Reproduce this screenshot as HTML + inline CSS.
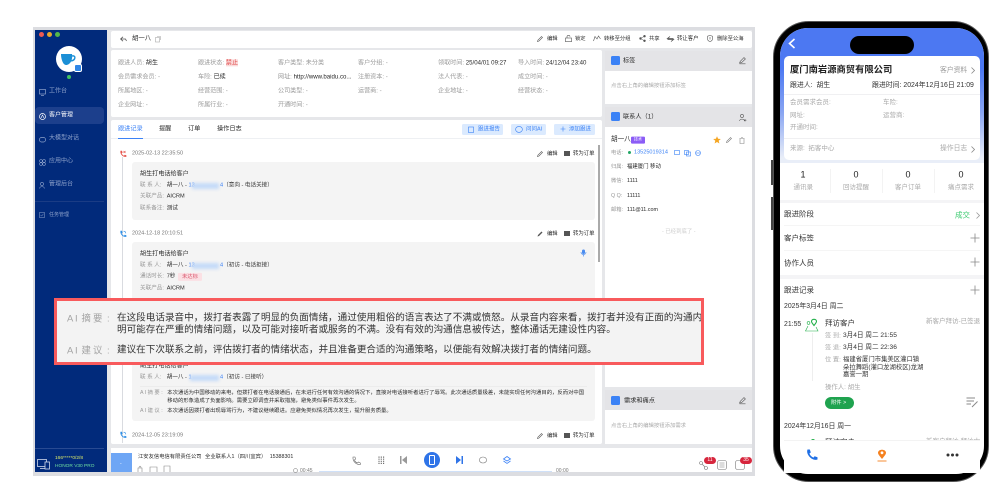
<!DOCTYPE html>
<html lang="zh"><head><meta charset="utf-8"><title>CRM</title>
<style>
html,body{margin:0;padding:0;background:#fff}
body{width:1000px;height:483px;overflow:hidden;position:relative;font-family:"Liberation Sans","Noto Sans CJK SC",sans-serif;color:#333}
.t{position:absolute;white-space:nowrap;transform:translateY(-50%);font-size:6.1px;line-height:1.2;font-style:normal}
.b{position:absolute}
svg{position:absolute;overflow:visible;fill:none}
.g{color:#999}.d{color:#2a2a2a}.w{color:#90a4cc;font-size:6px}
.bl{color:#3b82f6}
#app,#ph{filter:blur(.33px)}
.p{font-size:6.9px}
.q{font-size:6.5px;color:#aaa}
.s{font-size:5.6px}
.k{font-size:9.4px;color:#a3a3a3}
</style></head><body>
<div id="app">
<div class="b" style="left:33px;top:27px;width:722px;height:449px;background:#dcdde1"></div>
<div class="b" style="left:35px;top:30px;width:717px;height:442px;background:#e6e7ea"></div>
<!-- sidebar -->
<div class="b" style="left:35px;top:30px;width:72px;height:442px;background:#012a7b"></div>
<div class="b" style="left:38.5px;top:32px;width:5px;height:5px;border-radius:50%;background:#ee5a52"></div>
<div class="b" style="left:46.5px;top:32px;width:5px;height:5px;border-radius:50%;background:#e8a82e"></div>
<div class="b" style="left:54.5px;top:32px;width:5px;height:5px;border-radius:50%;background:#55b64a"></div>
<div class="b" style="left:56px;top:46px;width:26px;height:26px;border-radius:50%;background:#fff"></div>
<svg style="left:60px;top:53px" width="18" height="14"><path d="M1 1H12C13 7 10 12 6 12C3 12 1 6 1 1Z" fill="#1b8fd6"/><path d="M12 3C16 2 16 7 11 8" stroke="#1b8fd6" stroke-width="1.4"/></svg>
<div class="b" style="left:74px;top:64px;width:8px;height:8px;border-radius:2px;background:#2f86e6;border:1px solid #fff;box-sizing:border-box"></div>
<div class="b" style="left:67px;top:74.5px;width:4px;height:4px;border-radius:50%;background:#3fc15f"></div>
<div class="b" style="left:35px;top:107px;width:69px;height:17px;border-radius:4px;background:#1c3f8c"></div>
<svg style="left:39px;top:89px" width="7" height="7"><rect x=".5" y=".5" width="6" height="4.5" stroke="#90a4cc" stroke-width=".7"/><path d="M2 6.5H5" stroke="#90a4cc" stroke-width=".7"/></svg>
<i class="t w" style="left:49px;top:92px">工作台</i>
<svg style="left:39px;top:113px" width="7" height="7"><circle cx="3.5" cy="3.5" r="3" stroke="#fff" stroke-width=".7"/><path d="M2 5L3.5 2L5 5" stroke="#fff" stroke-width=".6"/></svg>
<i class="t" style="left:49px;top:116px;color:#fff;font-size:6px">客户管理</i>
<svg style="left:39px;top:136px" width="7" height="7"><rect x=".5" y="1.5" width="6" height="4.5" rx="2" stroke="#90a4cc" stroke-width=".7"/></svg>
<i class="t w" style="left:49px;top:139px">大模型对话</i>
<svg style="left:39px;top:159px" width="7" height="7"><circle cx="2" cy="2" r="1.4" stroke="#90a4cc" stroke-width=".6"/><circle cx="5" cy="2" r="1.4" stroke="#90a4cc" stroke-width=".6"/><circle cx="2" cy="5" r="1.4" stroke="#90a4cc" stroke-width=".6"/><circle cx="5" cy="5" r="1.4" stroke="#90a4cc" stroke-width=".6"/></svg>
<i class="t w" style="left:49px;top:162px">应用中心</i>
<svg style="left:39px;top:182px" width="7" height="7"><circle cx="3" cy="2" r="1.6" stroke="#90a4cc" stroke-width=".6"/><path d="M.5 6.5C1 4 5 4 5.5 6.5" stroke="#90a4cc" stroke-width=".6"/></svg>
<i class="t w" style="left:49px;top:185px">管理后台</i>
<div class="b" style="left:35px;top:200.5px;width:69px;height:1px;background:#1a3c85"></div>
<svg style="left:39px;top:212px" width="6" height="6"><rect x=".5" y=".5" width="5" height="5" stroke="#90a4cc" stroke-width=".5"/><path d="M1.5 3L2.7 4L4.5 1.8" stroke="#90a4cc" stroke-width=".5"/></svg>
<i class="t w" style="left:49px;top:215px;font-size:5px">任务管理</i>
<div class="b" style="left:35px;top:448px;width:69px;height:1px;background:#284a92"></div>
<svg style="left:37px;top:459px" width="14" height="11"><rect x=".5" y=".5" width="9" height="7" stroke="#cfd8ea" stroke-width=".8"/><rect x="8" y="3" width="4.5" height="7" fill="#012a7b" stroke="#cfd8ea" stroke-width=".8"/><path d="M3 9.5H8" stroke="#cfd8ea" stroke-width=".8"/></svg>
<i class="t" style="left:55px;top:459px;font-size:4.8px;color:#d9e86b">166*****0/2/8</i>
<i class="t" style="left:55px;top:467px;font-size:4.8px;color:#6fe0a0">HONOR V30 PRO</i>
<!-- header -->
<div class="b" style="left:111px;top:31px;width:641px;height:17px;background:#fff;border-radius:2px"></div>
<svg style="left:120px;top:36px" width="7" height="6"><path d="M3 .8L.6 3L3 5.2M1 3H5.5L6.5 5" stroke="#555" stroke-width=".8"/></svg>
<i class="t d" style="left:132px;top:39px;font-size:6.4px">胡一八</i>
<svg style="left:155px;top:36px" width="6" height="6"><rect x=".5" y="1.5" width="4" height="4.5" stroke="#aaa" stroke-width=".6"/><path d="M2 .5H5.5V4" stroke="#aaa" stroke-width=".6"/></svg>
<svg style="left:537px;top:36px" width="6" height="6"><path d="M.5 5.5L1 4L4.5.5L5.5 1.5L2 5Z" stroke="#555" stroke-width=".6"/></svg><i class="t d" style="left:547px;top:39px;font-size:5.3px">编辑</i>
<svg style="left:565px;top:35px" width="7" height="7"><rect x=".5" y="3" width="6" height="3.7" stroke="#555" stroke-width=".6"/><path d="M2 3V1.6C2 0 5 0 5 1.6" stroke="#555" stroke-width=".6"/></svg><i class="t d" style="left:575px;top:39px;font-size:5.3px">锁定</i>
<svg style="left:593px;top:35px" width="8" height="7"><path d="M.5 6L2 1.5L4 4L5.5 1L7.5 4" stroke="#555" stroke-width=".6"/></svg><i class="t d" style="left:604px;top:39px;font-size:5.3px">转移至分组</i>
<svg style="left:639px;top:35px" width="7" height="7"><circle cx="1.5" cy="3.5" r="1.2" fill="#555"/><circle cx="5.5" cy="1.2" r="1.2" fill="#555"/><circle cx="5.5" cy="5.8" r="1.2" fill="#555"/><path d="M1.5 3.5L5.5 1.2M1.5 3.5L5.5 5.8" stroke="#555" stroke-width=".5"/></svg><i class="t d" style="left:649px;top:39px;font-size:5.3px">共享</i>
<svg style="left:667px;top:36px" width="7" height="6"><path d="M3 .5L.5 2.5H6.5M4 5.5L6.5 3.5H.5" stroke="#444" stroke-width=".8"/></svg><i class="t d" style="left:677px;top:39px;font-size:5.4px">转让客户</i>
<svg style="left:707px;top:35px" width="6" height="7"><path d="M.6 1.2L3 .4L5.4 1.2V4C5.4 5.5 4 6.3 3 6.6C2 6.3 .6 5.5 .6 4Z" stroke="#555" stroke-width=".6"/><path d="M3 2V4.5" stroke="#555" stroke-width=".6"/></svg><i class="t d" style="left:717px;top:39px;font-size:5.3px">删除至公海</i>
<!-- info -->
<div class="b" style="left:111px;top:50px;width:491px;height:67px;background:#fff;border-radius:2px"></div>
<i class="t g" style="left:118px;top:62.5px">跟进人员: <span class="d">胡生</span></i>
<i class="t g" style="left:198px;top:62.5px">跟进状态: <span style="color:#e04b4b;background:#fadada">禁止</span></i>
<i class="t g" style="left:278px;top:62.5px">客户类型: 未分类</i>
<i class="t g" style="left:358px;top:62.5px">客户分组: -</i>
<i class="t g" style="left:438px;top:62.5px">领取时间: <span class="d">25/04/01 09:27</span></i>
<i class="t g" style="left:518px;top:62.5px">导入时间: <span class="d">24/12/04 23:40</span></i>
<i class="t g" style="left:118px;top:77px">会员需求会员: -</i>
<i class="t g" style="left:198px;top:77px">车险: <span class="d">已续</span></i>
<i class="t g" style="left:278px;top:77px">网址: <span class="d">http://www.baidu.co...</span></i>
<i class="t g" style="left:358px;top:77px">注册资本: -</i>
<i class="t g" style="left:438px;top:77px">法人代表: -</i>
<i class="t g" style="left:518px;top:77px">成立时间: -</i>
<i class="t g" style="left:118px;top:91px">所属地区: -</i>
<i class="t g" style="left:198px;top:91px">经营范围: -</i>
<i class="t g" style="left:278px;top:91px">公司类型: -</i>
<i class="t g" style="left:358px;top:91px">运营商: -</i>
<i class="t g" style="left:438px;top:91px">企业地址: -</i>
<i class="t g" style="left:518px;top:91px">经营状态: -</i>
<i class="t g" style="left:118px;top:105px">企业网址: -</i>
<i class="t g" style="left:198px;top:105px">所属行业: -</i>
<i class="t g" style="left:278px;top:105px">开通时间: -</i>
<!-- main -->
<div class="b" style="left:111px;top:120px;width:491px;height:324px;background:#fff;border-radius:2px"></div>
<div class="b" style="left:111px;top:138px;width:491px;height:1px;background:#eef0f3"></div>
<i class="t bl" style="left:118px;top:129px;font-size:6.2px">跟进记录</i>
<div class="b" style="left:118px;top:137.5px;width:25px;height:1.3px;background:#3b82f6"></div>
<i class="t d" style="left:159px;top:129px;font-size:6.2px">提醒</i>
<i class="t d" style="left:188px;top:129px;font-size:6.2px">订单</i>
<i class="t d" style="left:217px;top:129px;font-size:6.2px">操作日志</i>
<div class="b" style="left:462px;top:124px;width:41px;height:11px;background:#dbeafe;border-radius:1.5px"></div>
<svg style="left:468px;top:126px" width="6" height="7"><rect x=".5" y="1" width="5" height="5.5" stroke="#3b82f6" stroke-width=".6"/></svg>
<i class="t bl" style="left:478px;top:129.5px;font-size:5.5px">跟进报告</i>
<div class="b" style="left:511px;top:124px;width:35px;height:11px;background:#dbeafe;border-radius:1.5px"></div>
<svg style="left:515px;top:126px" width="8" height="7"><ellipse cx="4" cy="3.4" rx="3.4" ry="3" stroke="#3b82f6" stroke-width=".6"/></svg>
<i class="t bl" style="left:526px;top:129.5px;font-size:5.5px">问问AI</i>
<div class="b" style="left:554px;top:124px;width:41px;height:11px;background:#dbeafe;border-radius:1.5px"></div>
<svg style="left:560px;top:126px" width="6" height="6"><path d="M3 .5V5.5M.5 3H5.5" stroke="#3b82f6" stroke-width=".6"/></svg>
<i class="t bl" style="left:569px;top:129.5px;font-size:5.5px">添加跟进</i>
<div class="b" style="left:122px;top:157px;width:1px;height:286px;background:#d9dbe0"></div>
<div class="b" style="left:598px;top:145px;width:2px;height:117px;background:#aaa"></div>
<!-- entry1 -->
<svg style="left:119px;top:149.5px" width="8" height="8"><path d="M1.5 .8L3 .8L3.6 2.6L2.6 3.4C3.2 4.6 3.9 5.2 5 5.8L5.8 4.8L7.4 5.4V6.8C4 7.6 .6 4 1.5 .8Z" fill="#e5534b"/><path d="M4.5 1L6.5 3M6.5 1L4.5 3" stroke="#e5534b" stroke-width=".6"/></svg>
<i class="t" style="left:132px;top:153.5px;font-size:5.5px;color:#777">2025-02-13 22:35:50</i>
<svg style="left:537px;top:150.5px" width="6" height="6"><path d="M.5 5.5L1 4L4.5.5L5.5 1.5L2 5Z" stroke="#555" stroke-width=".6"/></svg><i class="t d" style="left:547px;top:153.5px;font-size:5.3px">编辑</i>
<div class="b" style="left:564px;top:151px;width:6px;height:5px;background:#555"></div><i class="t d" style="left:573px;top:153.5px;font-size:5.4px">转为订单</i>
<div class="b" style="left:132px;top:162px;width:463px;height:58px;background:#f4f4f4;border-radius:3px"></div>
<i class="t d" style="left:140px;top:173.5px;font-size:6.1px">胡生打电话给客户</i>
<i class="t g s" style="left:140px;top:186px">联 系 人:</i>
<i class="t d s" style="left:166.7px;top:186px">胡一八 - <span class="bl">13</span></i>
<div class="b" style="left:192px;top:183px;width:27px;height:6px;background:#c4daf8;filter:blur(1.5px)"></div>
<i class="t s" style="left:220px;top:186px"><span class="bl">4</span>（意向 - 电话关接）</i>
<i class="t g s" style="left:140px;top:197px">关联产品:</i><i class="t d s" style="left:166.7px;top:197px">AICRM</i>
<i class="t g s" style="left:140px;top:209px">联系备注:</i><i class="t d s" style="left:166.7px;top:209px">测试</i>
<!-- entry2 -->
<svg style="left:119px;top:229.5px" width="8" height="8"><path d="M1.5 .8L3 .8L3.6 2.6L2.6 3.4C3.2 4.6 3.9 5.2 5 5.8L5.8 4.8L7.4 5.4V6.8C4 7.6 .6 4 1.5 .8Z" fill="#2f8fe6"/><path d="M4.5 1.2C6 1.2 6.8 2 6.8 3.4" stroke="#2f8fe6" stroke-width=".6"/></svg>
<i class="t" style="left:132px;top:233.5px;font-size:5.5px;color:#777">2024-12-18 20:10:51</i>
<svg style="left:537px;top:230.5px" width="6" height="6"><path d="M.5 5.5L1 4L4.5.5L5.5 1.5L2 5Z" fill="#555"/></svg><i class="t d" style="left:547px;top:233.5px;font-size:5.3px">编辑</i>
<div class="b" style="left:564px;top:231px;width:6px;height:5px;background:#555"></div><i class="t d" style="left:573px;top:233.5px;font-size:5.4px">转为订单</i>
<div class="b" style="left:132px;top:242px;width:463px;height:179px;background:#f4f4f4;border-radius:3px"></div>
<svg style="left:580px;top:249px" width="7" height="8"><rect x="2" y=".5" width="3" height="4.5" rx="1.5" fill="#4a8cf0"/><path d="M1 3C1 6.4 6 6.4 6 3M3.5 5.8V7.5" stroke="#4a8cf0" stroke-width=".7"/></svg>
<i class="t d" style="left:140px;top:253.5px;font-size:6.1px">胡生打电话给客户</i>
<i class="t g s" style="left:140px;top:266px">联 系 人:</i>
<i class="t d s" style="left:166.7px;top:266px">胡一八 - <span class="bl">13</span></i>
<div class="b" style="left:192px;top:263px;width:27px;height:6px;background:#c4daf8;filter:blur(1.5px)"></div>
<i class="t s" style="left:220px;top:266px"><span class="bl">4</span>（初访 - 电话拒接）</i>
<i class="t g s" style="left:140px;top:277px">通话时长:</i><i class="t d s" style="left:166.7px;top:277px">7秒</i>
<i class="t" style="left:178px;top:277px;font-size:5.3px;color:#d9536a;background:#fbe0e4;padding:1px 4px;border-radius:1px">未达标</i>
<i class="t g s" style="left:140px;top:289px">关联产品:</i><i class="t d s" style="left:166.7px;top:289px">AICRM</i>
<!-- entry3 -->
<i class="t d" style="left:140px;top:366px;font-size:6.1px">胡生打电话给客户</i>
<i class="t g s" style="left:140px;top:378px">联 系 人:</i>
<i class="t d s" style="left:166.7px;top:378px">胡一八 - <span class="bl">1</span></i>
<div class="b" style="left:190px;top:375px;width:29px;height:6px;background:#c4daf8;filter:blur(1.5px)"></div>
<i class="t s" style="left:220px;top:378px"><span class="bl">4</span>（初访 - 已接听）</i>
<div class="b" style="left:140px;top:385.5px;width:447px;height:1px;background:#ececec"></div>
<i class="t g" style="left:140px;top:393.3px;font-size:5.3px">A I 摘 要 :</i>
<i class="t d" style="left:167.3px;top:393.3px;font-size:5.35px">本次通话为中国移动的来电，但拨打者在电话接通后，在未进行任何有效沟通的情况下，直接对电话接听者进行了辱骂。此次通话质量极差，未能实现任何沟通目的，反而对中国</i>
<i class="t d" style="left:167.3px;top:400.5px;font-size:5.35px">移动的形象造成了负面影响。需要立即调查并采取措施，避免类似事件再次发生。</i>
<i class="t g" style="left:140px;top:411px;font-size:5.3px">A I 建 议 :</i>
<i class="t d" style="left:167.3px;top:411px;font-size:5.35px">本次通话因拨打者出现辱骂行为，不建议继续跟进。应避免类似情况再次发生，提升服务质量。</i>
<svg style="left:119px;top:431px" width="8" height="8"><path d="M1.5 .8L3 .8L3.6 2.6L2.6 3.4C3.2 4.6 3.9 5.2 5 5.8L5.8 4.8L7.4 5.4V6.8C4 7.6 .6 4 1.5 .8Z" fill="#2f8fe6"/><path d="M4.5 1.2C6 1.2 6.8 2 6.8 3.4" stroke="#2f8fe6" stroke-width=".6"/></svg>
<i class="t" style="left:132px;top:435.5px;font-size:5.5px;color:#777">2024-12-05 23:19:09</i>
<svg style="left:537px;top:432.5px" width="6" height="6"><path d="M.5 5.5L1 4L4.5.5L5.5 1.5L2 5Z" stroke="#555" stroke-width=".6"/></svg><i class="t d" style="left:547px;top:435.5px;font-size:5.3px">编辑</i>
<div class="b" style="left:564px;top:433px;width:6px;height:5px;background:#555"></div><i class="t d" style="left:573px;top:435.5px;font-size:5.4px">转为订单</i>
<!-- right panels -->
<div class="b" style="left:605px;top:51px;width:147px;height:20px;background:#e4e4e7"></div>
<div class="b" style="left:605px;top:71px;width:147px;height:33px;background:#fff"></div>
<div class="b" style="left:611px;top:56px;width:9px;height:9px;background:#3b82f6;border-radius:1.5px"></div>
<i class="t d" style="left:623px;top:60.5px;font-size:6.2px">标签</i>
<svg style="left:739px;top:57px" width="7" height="7"><path d="M.6 6L1.2 4.4L5 .6L6.4 2L2.6 5.6ZM.5 6.8H6.5" stroke="#555" stroke-width=".6"/></svg>
<i class="t" style="left:611px;top:86px;font-size:5.36px;color:#aaa">点击右上角的编辑按钮添加标签</i>
<div class="b" style="left:605px;top:107px;width:147px;height:20px;background:#e4e4e7"></div>
<div class="b" style="left:605px;top:127px;width:147px;height:260px;background:#fff"></div>
<div class="b" style="left:611px;top:112px;width:9px;height:9px;background:#3b82f6;border-radius:1.5px"></div>
<i class="t d" style="left:623px;top:117px;font-size:6.2px">联系人（1）</i>
<svg style="left:739px;top:113.5px" width="8" height="8"><circle cx="3" cy="2" r="1.6" stroke="#555" stroke-width=".6"/><path d="M.5 7C1 4.5 5 4.5 5.5 7M6 5V7.5M5 6.2H7.4" stroke="#555" stroke-width=".6"/></svg>
<i class="t d" style="left:611px;top:140px;font-size:6.6px">胡一八</i>
<i class="t" style="left:631px;top:140px;font-size:4px;color:#fff;background:#8b5cf6;padding:1px 3px;border-radius:1px">技术</i>
<svg style="left:713px;top:136px" width="8" height="8"><path d="M4 .3L5.1 2.8L7.8 3L5.7 4.8L6.4 7.5L4 6L1.6 7.5L2.3 4.8L.2 3L2.9 2.8Z" fill="#f5a623"/></svg>
<svg style="left:726px;top:137px" width="6" height="6"><path d="M.5 5.5L1 4L4.5.5L5.5 1.5L2 5Z" stroke="#777" stroke-width=".6"/></svg>
<svg style="left:739px;top:136.5px" width="6" height="7"><path d="M.5 1.5H5.5M1 1.5V6.5H5V1.5M2 .5H4" stroke="#888" stroke-width=".6"/></svg>
<i class="t g" style="left:611px;top:152.5px;font-size:5.3px">电话:</i>
<div class="b" style="left:627.5px;top:151px;width:3px;height:3px;border-radius:50%;background:#22a565"></div>
<i class="t bl" style="left:634px;top:152.5px;font-size:5.55px">13525019314</i>
<svg style="left:674px;top:149.5px" width="6" height="6"><rect x=".5" y=".5" width="5" height="4" stroke="#3b82f6" stroke-width=".6"/></svg>
<svg style="left:684px;top:149.5px" width="7" height="6"><rect x=".5" y=".5" width="4" height="4" stroke="#3b82f6" stroke-width=".6"/><rect x="2.5" y="2" width="4" height="4" stroke="#3b82f6" stroke-width=".6"/></svg>
<svg style="left:695px;top:149.5px" width="6" height="6"><circle cx="3" cy="3" r="2.5" stroke="#3b82f6" stroke-width=".6"/><path d="M1 3H5" stroke="#3b82f6" stroke-width=".6"/></svg>
<i class="t g" style="left:611px;top:167px;font-size:5.3px">归属:</i><i class="t d" style="left:627px;top:167px;font-size:5.4px">福建厦门 移动</i>
<i class="t g" style="left:611px;top:181px;font-size:5.3px">微信:</i><i class="t d" style="left:627px;top:181px;font-size:5.4px">1111</i>
<i class="t g" style="left:611px;top:195.5px;font-size:5.3px">Q Q:</i><i class="t d" style="left:627px;top:195.5px;font-size:5.4px">11111</i>
<i class="t g" style="left:611px;top:210px;font-size:5.3px">邮箱:</i><i class="t d" style="left:627px;top:210px;font-size:5.4px">111@11.com</i>
<i class="t" style="left:662px;top:231.5px;font-size:5.4px;color:#ccc">- 已经到底了 -</i>
<div class="b" style="left:605px;top:390px;width:147px;height:20px;background:#e4e4e7"></div>
<div class="b" style="left:605px;top:410px;width:147px;height:34px;background:#fff"></div>
<div class="b" style="left:611px;top:396px;width:9px;height:9px;background:#3b82f6;border-radius:1.5px"></div>
<i class="t d" style="left:624px;top:400.5px;font-size:6.2px">需求和痛点</i>
<svg style="left:739px;top:397px" width="7" height="7"><path d="M.6 6L1.2 4.4L5 .6L6.4 2L2.6 5.6ZM.5 6.8H6.5" stroke="#555" stroke-width=".6"/></svg>
<i class="t" style="left:611px;top:426px;font-size:5.36px;color:#aaa">点击右上角的编辑按钮添加需求</i>
<!-- bottom -->
<div class="b" style="left:111px;top:448px;width:641px;height:24px;background:#fff"></div>
<div class="b" style="left:111px;top:453px;width:21px;height:19px;background:#6ea6f5"></div>
<i class="t" style="left:120px;top:464px;color:#fff;font-size:5px">-</i>
<i class="t d" style="left:138px;top:457px;font-size:5.3px;word-spacing:2px">江安友信电信有限责任公司 全业联系人1（四川宜宾） 15388301</i>
<svg style="left:137px;top:465px" width="36" height="7"><path d="M1 7V3H5V7M2 3C2 .5 4 .5 4 3M13 7V2H20V7M27 7V1H33V7" stroke="#888" stroke-width=".6"/></svg>
<svg style="left:352px;top:456px" width="9" height="9"><path d="M1 1L3 1L3.5 3L2.5 4C3 5.5 4 6.5 5.5 7L6.5 6L8.4 7V8.5C4 9 .5 5 1 1Z" stroke="#666" stroke-width=".6"/></svg>
<svg style="left:378px;top:456px" width="7" height="9"><path d="M1 .5V8M3.3 .5V8M5.6 .5V8" stroke="#666" stroke-width="1.1" stroke-dasharray="1.2 .9"/></svg>
<svg style="left:400px;top:456px" width="7" height="8"><rect x="0" y="0" width="1.5" height="8" fill="#999"/><path d="M7 0V8L2 4Z" fill="#999"/></svg>
<div class="b" style="left:424px;top:452px;width:16px;height:16px;border-radius:50%;background:#2f74e8"></div>
<div class="b" style="left:429px;top:455px;width:6px;height:10px;border:1px solid #fff;box-sizing:border-box;border-radius:1px"></div>
<svg style="left:456px;top:456px" width="7" height="8"><path d="M0 0V8L5 4Z" fill="#2f74e8"/><rect x="5.5" y="0" width="1.5" height="8" fill="#2f74e8"/></svg>
<svg style="left:479px;top:456px" width="8" height="8"><ellipse cx="4" cy="4" rx="3.6" ry="3" stroke="#777" stroke-width=".6"/></svg>
<svg style="left:503px;top:456px" width="8" height="8"><path d="M4 .5L7.5 3L4 5L.5 3ZM.5 5L4 7.4L7.5 5" stroke="#3b82f6" stroke-width=".8"/></svg>
<svg style="left:293px;top:468px" width="5" height="5"><circle cx="2.5" cy="2.5" r="2" stroke="#777" stroke-width=".5"/></svg>
<i class="t" style="left:300px;top:471px;font-size:5px;color:#777">00:45</i>
<div class="b" style="left:319px;top:471px;width:233px;height:1px;background:#cfe0f8"></div>
<i class="t" style="left:556px;top:471px;font-size:5px;color:#777">00:00</i>
<svg style="left:699px;top:461px" width="9" height="9"><circle cx="2" cy="2" r="1.5" stroke="#777" stroke-width=".6"/><circle cx="7" cy="7" r="1.5" stroke="#777" stroke-width=".6"/><path d="M3 3L6 6" stroke="#777" stroke-width=".6"/></svg>
<div class="b" style="left:704px;top:457px;width:12px;height:7px;border-radius:4px;background:#d7263d;color:#fff;font-size:5px;line-height:7px;text-align:center">11</div>
<svg style="left:717px;top:460px" width="10" height="10"><rect x=".5" y=".5" width="9" height="9" rx="2" stroke="#777" stroke-width=".6"/><path d="M2.5 3H7.5M2.5 5H7.5M2.5 7H7.5" stroke="#777" stroke-width=".5"/></svg>
<svg style="left:735px;top:460px" width="10" height="10"><rect x=".5" y=".5" width="9" height="9" rx="2" stroke="#777" stroke-width=".6"/></svg>
<div class="b" style="left:740px;top:457px;width:12px;height:7px;border-radius:4px;background:#d7263d;color:#fff;font-size:5px;line-height:7px;text-align:center">35</div>
<!-- overlay -->
<div class="b" style="left:54px;top:297.7px;width:649.5px;height:67.5px;box-sizing:border-box;border:3.4px solid #f85a5c;background:#f3f3f3;overflow:hidden"></div>
<div class="b" style="left:57px;top:301px;width:643.5px;height:61px;overflow:hidden">
<i class="t k" style="left:10px;top:16.5px">A</i><i class="t k" style="left:18px;top:16.5px">I</i><i class="t k" style="left:24.5px;top:16.5px">摘</i><i class="t k" style="left:36px;top:16.5px">要</i><i class="t k" style="left:50px;top:16.5px">:</i>
<i class="t" style="left:60px;top:16.5px;font-size:9.6px;color:#333">在这段电话录音中，拨打者表露了明显的负面情绪，通过使用粗俗的语言表达了不满或愤怒。从录音内容来看，拨打者并没有正面的沟通内</i>
<i class="t" style="left:60px;top:28.7px;font-size:9.6px;color:#333">明可能存在严重的情绪问题，以及可能对接听者或服务的不满。没有有效的沟通信息被传达，整体通话无建设性内容。</i>
<i class="t k" style="left:10px;top:49px">A</i><i class="t k" style="left:18px;top:49px">I</i><i class="t k" style="left:24.5px;top:49px">建</i><i class="t k" style="left:36px;top:49px">议</i><i class="t k" style="left:50px;top:49px">:</i>
<i class="t" style="left:60px;top:49px;font-size:9.6px;color:#333">建议在下次联系之前，评估拨打者的情绪状态，并且准备更合适的沟通策略，以便能有效解决拨打者的情绪问题。</i>
</div>
</div>
<!-- phone -->
<div id="ph">
<div class="b" style="left:771px;top:160px;width:2.5px;height:25px;background:#444"></div>
<div class="b" style="left:771px;top:197px;width:2.5px;height:33px;background:#444"></div>
<div class="b" style="left:772.5px;top:21px;width:216px;height:461px;box-sizing:border-box;background:#000;border:1px solid #555;border-radius:36px"></div>
<div class="b" style="left:780px;top:28px;width:203.5px;height:445.5px;border-radius:28px;overflow:hidden;background:#fff">
 <div class="b" style="left:0;top:0;width:100%;height:135px;background:linear-gradient(#4c78f2 0,#4c78f2 40px,#8aa6f2 85px,#e9eef8 130px)"></div>
 <svg style="left:8px;top:10px" width="8" height="11"><path d="M6.5 1L1.5 5.5L6.5 10" stroke="#fff" stroke-width="1.6"/></svg>
 <div class="b" style="left:70px;top:8px;width:64px;height:18px;border-radius:9px;background:#000"></div>
 <div class="b" style="left:4px;top:28px;width:196px;height:104px;border-radius:5px;background:#fff"></div>
 <div class="b" style="left:0;top:135px;width:100%;height:37px;background:#fff"></div>
 <div class="b" style="left:0;top:172px;width:100%;height:3px;background:#f4f4f6"></div>
 <div class="b" style="left:0;top:247px;width:100%;height:4px;background:#f4f4f6"></div>
</div>
<i class="t" style="left:790px;top:70px;font-size:9.3px;font-weight:bold;color:#222">厦门南岩源商贸有限公司</i>
<i class="t" style="left:940px;top:70.5px;font-size:6.8px;color:#999">客户资料</i>
<svg style="left:971px;top:67px" width="4" height="7"><path d="M.5 .5L3.5 3.5L.5 6.5" stroke="#888" stroke-width=".8"/></svg>
<i class="t p" style="left:790px;top:86px;color:#333">跟进人: &nbsp;胡生</i>
<i class="t p" style="left:872px;top:86px;color:#333">跟进时间: 2024年12月16日 21:09</i>
<div class="b" style="left:784px;top:94px;width:196px;height:1px;background:#f0f0f2"></div>
<i class="t q" style="left:790px;top:103px">会员需求会员:</i><i class="t q" style="left:883px;top:103px">车险:</i>
<i class="t q" style="left:790px;top:115.5px">网址:</i><i class="t q" style="left:883px;top:115.5px">运营商:</i>
<i class="t q" style="left:790px;top:128px">开通时间:</i>
<div class="b" style="left:784px;top:138px;width:196px;height:1px;background:#f0f0f2"></div>
<i class="t q" style="left:790px;top:149px">来源: &nbsp;拓客中心</i>
<i class="t q" style="left:940px;top:149px;font-size:6.8px">操作日志</i>
<svg style="left:971px;top:146px" width="4" height="7"><path d="M.5 .5L3.5 3.5L.5 6.5" stroke="#888" stroke-width=".8"/></svg>
<i class="t" style="left:800.5px;top:174.5px;font-size:9px;color:#222">1</i>
<i class="t" style="left:853.5px;top:174.5px;font-size:9px;color:#222">0</i>
<i class="t" style="left:905.5px;top:174.5px;font-size:9px;color:#222">0</i>
<i class="t" style="left:958.5px;top:174.5px;font-size:9px;color:#222">0</i>
<i class="t q" style="left:793.5px;top:187.5px">通讯录</i>
<i class="t q" style="left:843px;top:187.5px">回访提醒</i>
<i class="t q" style="left:895px;top:187.5px">客户订单</i>
<i class="t q" style="left:948px;top:187.5px">痛点需求</i>
<div class="b" style="left:829.5px;top:169px;width:1px;height:24px;background:#f3f3f3"></div>
<div class="b" style="left:882px;top:169px;width:1px;height:24px;background:#f3f3f3"></div>
<div class="b" style="left:934px;top:169px;width:1px;height:24px;background:#f3f3f3"></div>
<i class="t" style="left:784px;top:213.5px;font-size:7.5px;color:#333">跟进阶段</i>
<i class="t" style="left:955px;top:215px;font-size:7.5px;color:#3ccb70">成交</i>
<svg style="left:976px;top:212px" width="4" height="7"><path d="M.5 .5L3.5 3.5L.5 6.5" stroke="#999" stroke-width=".8"/></svg>
<div class="b" style="left:784px;top:225px;width:196px;height:1px;background:#f5f5f5"></div>
<i class="t" style="left:784px;top:238px;font-size:7.5px;color:#333">客户标签</i>
<svg style="left:970px;top:233px" width="10" height="10"><path d="M5 .5V9.5M.5 5H9.5" stroke="#888" stroke-width=".8"/></svg>
<div class="b" style="left:784px;top:250px;width:196px;height:1px;background:#f5f5f5"></div>
<i class="t" style="left:784px;top:262.5px;font-size:7.5px;color:#333">协作人员</i>
<svg style="left:970px;top:257px" width="10" height="10"><path d="M5 .5V9.5M.5 5H9.5" stroke="#888" stroke-width=".8"/></svg>
<i class="t" style="left:784px;top:290px;font-size:7.5px;color:#333">跟进记录</i>
<svg style="left:970px;top:285px" width="10" height="10"><path d="M5 .5V9.5M.5 5H9.5" stroke="#888" stroke-width=".8"/></svg>
<i class="t p" style="left:784px;top:307px;color:#333">2025年3月4日 周二</i>
<i class="t p" style="left:784px;top:325px;color:#333">21:55</i>
<svg style="left:805px;top:319px" width="14" height="13"><path d="M9 6.5C7 4 6.5 3 6.5 2.5C6.5-.4 11.5-.4 11.5 2.5C11.5 3 11 4 9 6.5Z" stroke="#23b04b" stroke-width="1.1"/><path d="M3 7L.5 12H13L11 8" stroke="#23b04b" stroke-width=".6"/><circle cx="3.5" cy="4" r="1.4" stroke="#23b04b" stroke-width=".6"/></svg>
<div class="b" style="left:811.5px;top:333px;width:1px;height:48px;background:#eee"></div>
<i class="t" style="left:825px;top:322.5px;font-size:7.5px;color:#333">拜访客户</i>
<i class="t" style="left:926px;top:322px;font-size:6.5px;color:#aaa">新客户拜访-已签退</i>
<i class="t" style="left:825px;top:335.5px;color:#aaa;font-size:6.2px">签 到:</i><i class="t" style="left:843px;top:335.5px;font-size:6.6px">3月4日 周二 21:55</i>
<i class="t" style="left:825px;top:348px;color:#aaa;font-size:6.2px">签 退:</i><i class="t" style="left:843px;top:348px;font-size:6.6px">3月4日 周二 22:36</i>
<i class="t" style="left:825px;top:360px;color:#aaa;font-size:6.2px">位 置:</i>
<i class="t" style="left:843px;top:360px;font-size:6.35px">福建省厦门市集美区灌口镇</i>
<i class="t" style="left:843px;top:367.5px;font-size:6.35px">朵拉舞蹈(灌口龙湖校区)龙湖</i>
<i class="t" style="left:843px;top:375px;font-size:6.35px">嘉誉一期</i>
<i class="t" style="left:825px;top:388px;color:#aaa;font-size:6.4px">操作人: 胡生</i>
<div class="b" style="left:825px;top:397px;width:29px;height:12px;border-radius:6px;background:#1fa34f"></div>
<i class="t" style="left:831px;top:403px;font-size:5.3px;color:#fff">附件 &gt;</i>
<svg style="left:966px;top:397px" width="13" height="11"><path d="M.5 1H9M.5 4H8M.5 7H5" stroke="#888" stroke-width=".9"/><path d="M6 10L11.5 4.5" stroke="#888" stroke-width="1"/></svg>
<i class="t p" style="left:784px;top:427px;color:#333">2024年12月16日 周一</i>
<i class="t" style="left:825px;top:442px;font-size:7.5px;color:#333">拜访客户</i>
<i class="t" style="left:926px;top:442px;font-size:6.5px;color:#aaa">新客户拜访-拜访中</i>
<div class="b" style="left:811px;top:439px;width:4px;height:4px;border-radius:50%;background:#23b04b"></div>
<div class="b" style="left:784px;top:440px;width:196px;height:33px;background:#fff;border-top:1px solid #f3f3f3;box-sizing:border-box"></div>
<svg style="left:806px;top:449px" width="12" height="12"><path d="M1.5 .5L3.8 .5L4.8 3.4L3.4 4.6C4.2 6.4 5.6 7.8 7.4 8.6L8.6 7.2L11.5 8.2V10.5C6.5 12.5-.5 5.5 1.5.5Z" fill="#1f6fe5"/></svg>
<svg style="left:877px;top:449px" width="10" height="13"><path d="M5 10C2 6.5 1 5 1 3.8C1-.3 9-.3 9 3.8C9 5 8 6.5 5 10Z" fill="#f5811f"/><circle cx="5" cy="3.8" r="1.4" fill="#fff"/><path d="M.5 12H9.5" stroke="#f5811f" stroke-width=".9"/></svg>
<svg style="left:946px;top:453px" width="13" height="4"><circle cx="2" cy="2" r="1.5" fill="#333"/><circle cx="6.5" cy="2" r="1.5" fill="#333"/><circle cx="11" cy="2" r="1.5" fill="#333"/></svg>
</div>
</body></html>
